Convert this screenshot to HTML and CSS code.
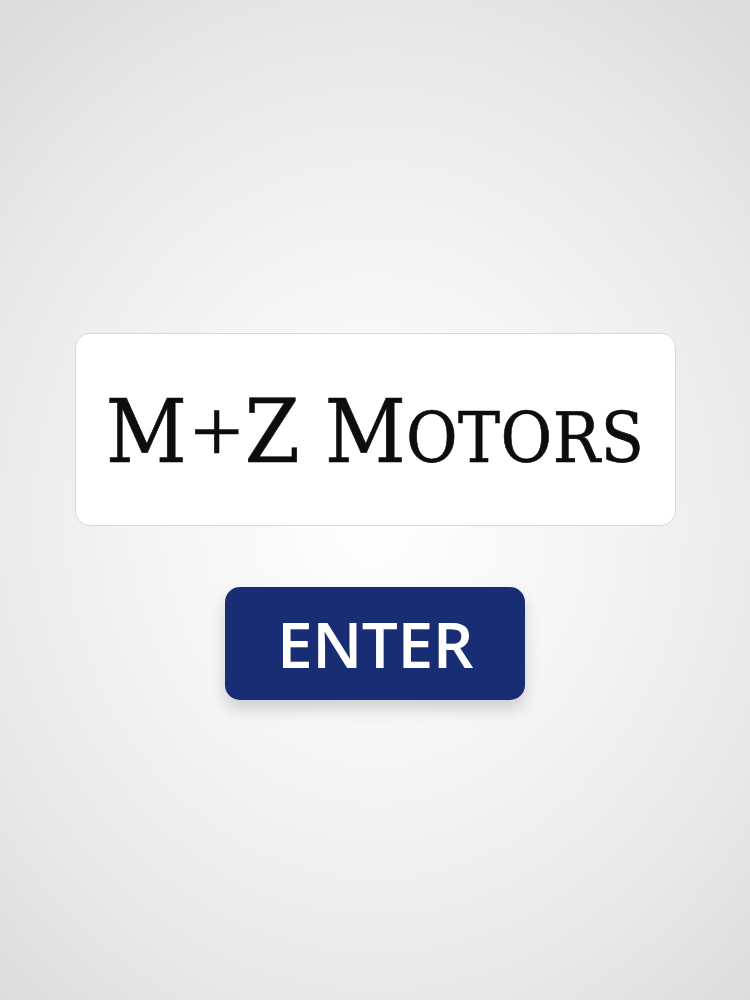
FILE: index.html
```html
<!DOCTYPE html>
<html lang="en">
<head>
<meta charset="utf-8">
<title>M+Z Motors</title>
<link rel="stylesheet" href="styles.css">
</head>
<body>
<main class="page">
  <div class="logo-card">
    <h1 class="logo">M<span class="plus">+</span>Z M<span class="sc">OTORS</span></h1>
  </div>
  <button class="enter-btn" type="button">ENTER</button>
</main>
</body>
</html>
```
FILE: styles.css
```css
html, body {
  margin: 0;
  padding: 0;
  height: 100%;
}
body {
  background: radial-gradient(ellipse 75% 65% at 50% 52%, #ffffff 0%, #f6f5f7 35%, #e9e7ea 75%, #dddbde 100%);
  background-color: #dddbde;
}
.page {
  box-sizing: border-box;
  height: 1000px;
  padding-top: 333px;
  display: flex;
  flex-direction: column;
  align-items: center;
  gap: 61px;
}
.logo-card {
  box-sizing: border-box;
  width: 601px;
  height: 193px;
  background: #ffffff;
  border: 1.5px solid #d9d8da;
  border-radius: 15px;
  display: flex;
  align-items: center;
  justify-content: center;
}
.logo {
  margin: 0;
  padding-top: 2px;
  font-family: "DejaVu Serif Condensed", "DejaVu Serif", serif;
  font-weight: normal;
  font-size: 88px;
  line-height: 1;
  color: #0d0d0d;
  letter-spacing: 0;
  white-space: nowrap;
  -webkit-text-stroke: 0.6px #0d0d0d;
}
.plus {
  font-family: "Liberation Serif", serif;
  font-size: 92px;
  margin: 0 2px 0 4px;
}
.sc {
  font-size: 70px;
  letter-spacing: 0.5px;
}
.enter-btn {
  box-sizing: border-box;
  width: 300px;
  height: 113px;
  border: none;
  border-radius: 15px;
  background: #182d73;
  color: #ffffff;
  font-family: "Open Sans", "Noto Sans", sans-serif;
  font-weight: 600;
  font-size: 64px;
  letter-spacing: -0.5px;
  padding: 0;
  box-shadow: 0 9px 16px rgba(0, 0, 0, 0.16);
}
```
